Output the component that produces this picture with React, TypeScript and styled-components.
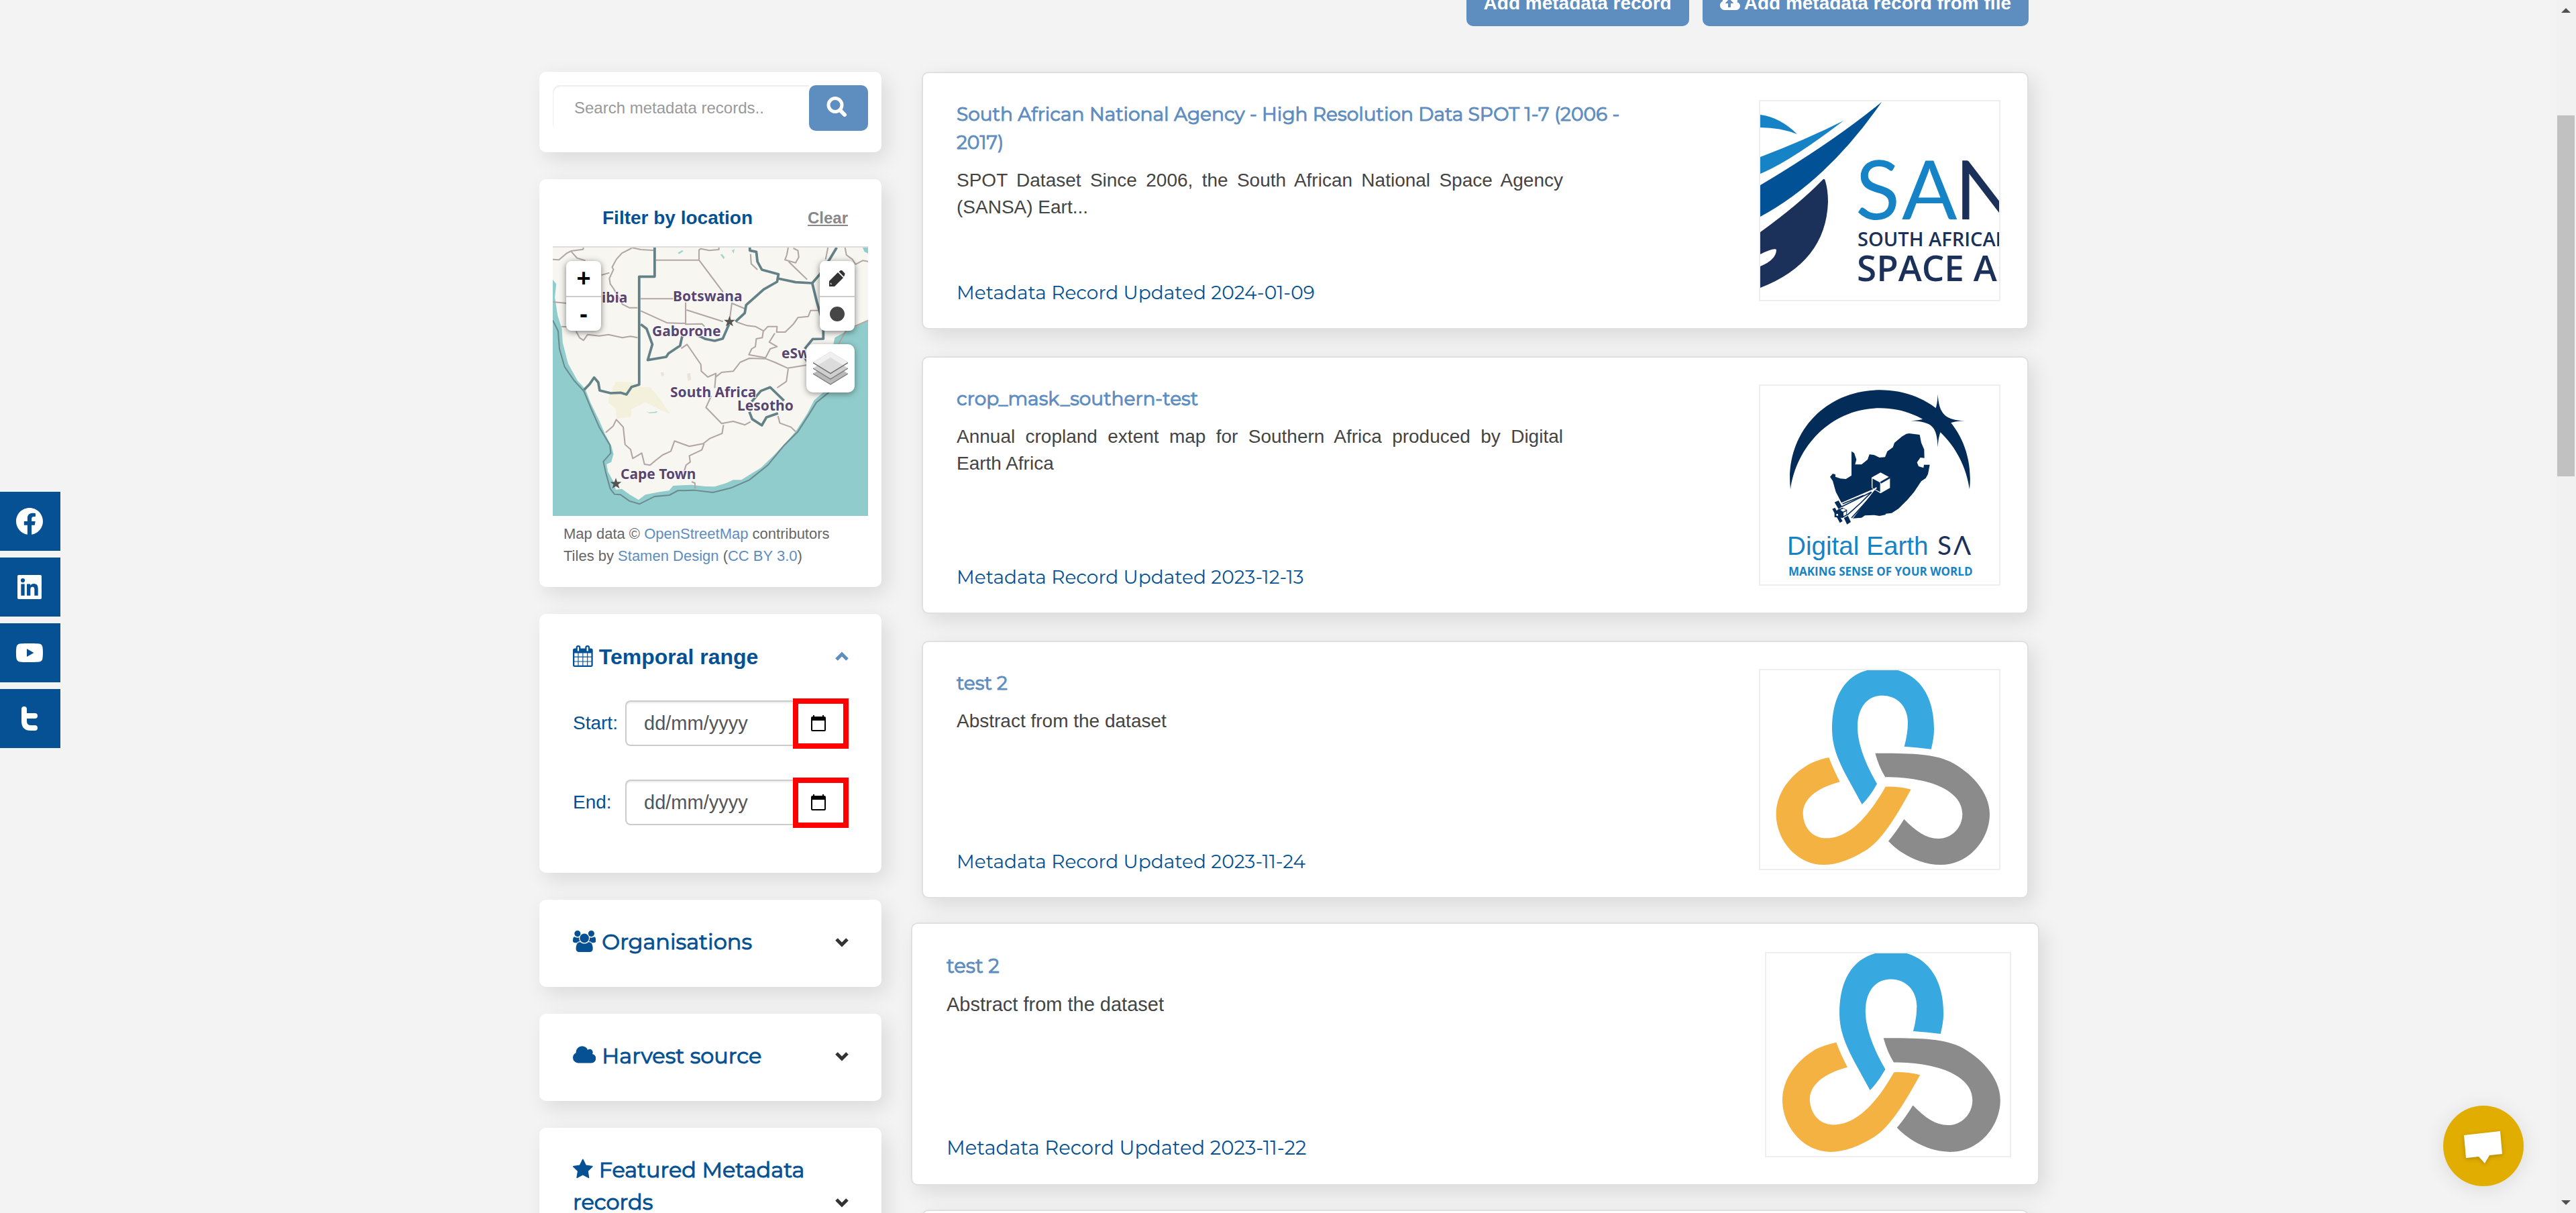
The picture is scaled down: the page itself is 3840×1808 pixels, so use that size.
import React from "react";
import styled, { createGlobalStyle, css } from "styled-components";
import { BiLogoFacebookCircle, BiLogoLinkedinSquare, BiLogoYoutube } from "react-icons/bi";

const sans = `"Liberation Sans", Arial, sans-serif`;
const display = `Montserrat, Inter, sans-serif`;
const navy = "#055193";
const steel = "#5e8dc0";

const GlobalStyle = createGlobalStyle`
  *, *::before, *::after { box-sizing: border-box; }
  html, body { margin: 0; background: #f3f3f3; }
  body { font-family: ${sans}; font-size: 28px; line-height: 40px; color: #444; overflow: hidden; }
  h2, h3, p { margin: 0; }
  a { color: ${steel}; text-decoration: none; }
  button { font: inherit; border: 0; padding: 0; cursor: pointer; }
`;

const Page = styled.div`
  height: 100vh;
  overflow: hidden;
  padding-right: 12px;
`;

const Container = styled.div`
  max-width: 2220px;
  margin: 0 auto;
`;

const Actions = styled.div`
  display: flex;
  justify-content: flex-end;
  gap: 20px;
  margin: -31px 0 68px;
`;

const ActionButton = styled.button`
  display: inline-flex;
  align-items: center;
  gap: 6px;
  height: 70px;
  padding: 2px 26px 0;
  border-radius: 10px;
  background: ${steel};
  color: #fff;
  font-weight: 700;
`;

const Columns = styled.main`
  display: grid;
  grid-template-columns: 510px minmax(0, 1fr);
  column-gap: 60px;
  align-items: start;
`;

const Stack = styled.div`
  display: flex;
  flex-direction: column;
  gap: 40px;
`;

const panelShadow = css`
  box-shadow: 8px 10px 30px rgba(0, 0, 0, 0.1);
`;

const Panel = styled.section<{ $pad: string }>`
  background: #fff;
  border-radius: 10px;
  padding: ${(p) => p.$pad};
  ${panelShadow}
`;

const SearchForm = styled.form`
  display: flex;
  height: 68px;
`;

const SearchInput = styled.input`
  flex: 1;
  min-width: 0;
  padding: 0 32px;
  border: 0;
  border-radius: 10px 0 0 10px;
  background: #fff;
  box-shadow: inset 1px 2px 2px rgba(0, 0, 0, 0.08);
  font: 24px ${sans};
  color: #555;
  &::placeholder { color: #999; opacity: 1; }
`;

const SearchButton = styled.button`
  display: flex;
  align-items: center;
  justify-content: center;
  width: 88px;
  padding: 0 5px 4px 0;
  border-radius: 10px;
  background: ${steel};
`;

const LocationHead = styled.div`
  display: flex;
  align-items: center;
  justify-content: space-between;
  height: 100px;
  padding: 16px 30px 0 74px;
`;

const LocationTitle = styled.h2`
  font-size: 28px;
  color: ${navy};
`;

const ClearLink = styled.a`
  font-size: 24px;
  font-weight: 700;
  color: #888;
  text-decoration: underline;
`;

const MapFrame = styled.div`
  position: relative;
  border-top: 2px solid #ddd;
`;

const MapDrawing = styled.svg`
  display: block;
  width: 100%;
  height: 400px;
`;

const MapControls = styled.div<{ $side: "left" | "right" }>`
  position: absolute;
  top: 20px;
  ${(p) => p.$side}: 20px;
  display: flex;
  flex-direction: column;
  border-radius: 8px;
  background: #fff;
  box-shadow: 0 2px 10px rgba(0, 0, 0, 0.5);
`;

const MapButton = styled.button`
  display: flex;
  align-items: center;
  justify-content: center;
  width: 52px;
  height: 52px;
  border-radius: 8px;
  background: transparent;
  color: #000;
  font-size: 36px;
  font-weight: 700;
  & + & { border-top: 2px solid #ccc; border-radius: 0; }
`;

const LayersButton = styled.button`
  position: absolute;
  top: 144px;
  right: 20px;
  display: flex;
  align-items: center;
  justify-content: center;
  width: 72px;
  height: 72px;
  border-radius: 10px;
  background: #fff;
  box-shadow: 0 2px 10px rgba(0, 0, 0, 0.4);
`;

const Attribution = styled.p`
  padding: 10px 16px 0;
  font-size: 22px;
  line-height: 33px;
  color: #666;
`;

const FacetHeader = styled.button<{ $plain?: boolean }>`
  display: flex;
  align-items: flex-end;
  justify-content: space-between;
  gap: 24px;
  width: 100%;
  background: transparent;
  text-align: left;
  color: ${navy};
  font-family: ${(p) => (p.$plain ? sans : display)};
  font-size: 32px;
  font-weight: ${(p) => (p.$plain ? 700 : 400)};
  -webkit-text-stroke: ${(p) => (p.$plain ? "0" : `1px ${navy}`)};
  line-height: 48px;
`;

const FacetIcon = styled.svg`
  height: 32px;
  margin-right: 9px;
  vertical-align: -4px;
  fill: currentColor;
`;

const Chevron = styled.svg<{ $open?: boolean }>`
  flex: none;
  width: 20px;
  height: 48px;
  fill: none;
  stroke: ${(p) => (p.$open ? steel : "#333")};
  stroke-width: 5;
`;

const DateRows = styled.div`
  display: flex;
  flex-direction: column;
  gap: 44px;
  margin-top: 38px;
`;

const DateRow = styled.div`
  display: flex;
  align-items: center;
  height: 74px;
`;

const DateLabel = styled.label`
  flex: none;
  width: 78px;
  color: ${navy};
`;

const DateInput = styled.input`
  flex: 1;
  min-width: 0;
  height: 68px;
  padding: 0 0 0 26px;
  border: 2px solid #ccc;
  border-right: 0;
  border-radius: 8px 0 0 8px;
  box-shadow: inset 0 2px 2px rgba(0, 0, 0, 0.08);
  font: 29px ${sans};
  color: #555;
  &::placeholder { color: #555; opacity: 1; }
`;

const PickerButton = styled.button`
  display: flex;
  align-items: center;
  justify-content: center;
  width: 83px;
  height: 75px;
  padding-right: 7px;
  border: 8px solid #f00;
  background: #fff;
`;

const Record = styled.article<{ $raised?: boolean }>`
  display: flex;
  justify-content: space-between;
  height: ${(p) => (p.$raised ? 392 : 384)}px;
  margin: ${(p) => (p.$raised ? "-4px -16px" : "0")};
  padding: ${(p) => (p.$raised ? "42px 40px 41px 51px" : "40px 40px 40px 50px")};
  border: 2px solid #e0e0e0;
  border-radius: 10px;
  background: #fff;
  font-size: ${(p) => (p.$raised ? 29 : 28)}px;
  ${panelShadow}
`;

const RecordBody = styled.div`
  display: flex;
  flex-direction: column;
  width: 1040px;
`;

const RecordTitle = styled.h3`
  font-family: ${display};
  font-size: inherit;
  font-weight: 400;
  line-height: 42px;
  -webkit-text-stroke: 1px ${steel};
`;

const RecordText = styled.p`
  width: 904px;
  margin-top: 16px;
  text-align: justify;
`;

const RecordDate = styled.p`
  margin-top: auto;
  font-family: ${display};
  line-height: 26px;
  color: ${navy};
`;

const Thumb = styled.div<{ $raised?: boolean }>`
  flex: none;
  width: ${(p) => (p.$raised ? 367 : 360)}px;
  height: ${(p) => (p.$raised ? 306 : 300)}px;
  border: 2px solid #eee;
  svg { display: block; width: 100%; height: 100%; }
`;

const Social = styled.nav`
  position: fixed;
  top: 733px;
  left: 0;
  display: flex;
  flex-direction: column;
  gap: 10px;
`;

const SocialLink = styled.a`
  display: flex;
  align-items: center;
  justify-content: center;
  width: 90px;
  height: 88px;
  padding-right: 2px;
  background: ${navy};
  color: #fff;
  font-size: 48px;
`;

const Chat = styled.button`
  position: fixed;
  right: 78px;
  bottom: 40px;
  width: 120px;
  height: 120px;
  border-radius: 50%;
  background: #e1ad01;
  box-shadow: 0 4px 30px rgba(0, 0, 0, 0.1);
  svg { display: block; filter: drop-shadow(0 2px 3px rgba(0, 0, 0, 0.2)); }
`;

const ScrollTrack = styled.div`
  position: fixed;
  top: 0;
  right: 0;
  bottom: 0;
  display: flex;
  flex-direction: column;
  align-items: center;
  justify-content: space-between;
  width: 30px;
  padding: 12px 0;
  background: #f1f1f1;
`;

const ScrollThumb = styled.div`
  width: 26px;
  height: 538px;
  margin: 153px 0 auto;
  background: #c1c1c1;
`;

const ICONS = {
  calendar: {
    box: "0 0 1664 1792",
    d: "M128 1664h288v-288H128v288zm352 0h320v-288H480v288zM128 1312h288V992H128v320zm352 0h320V992H480v320zM128 928h288V640H128v288zm736 736h320v-288H864v288zM480 928h320V640H480v288zm768 736h288v-288h-288v288zM864 1312h320V992H864v320zM512 448V160q0-13-9.5-22.5T480 128h-64q-13 0-22.5 9.5T384 160v288q0 13 9.5 22.5T416 480h64q13 0 22.5-9.5T512 448zm736 864h288V992h-288v320zM864 928h320V640H864v288zm384 0h288V640h-288v288zm32-480V160q0-13-9.5-22.5T1248 128h-64q-13 0-22.5 9.5T1152 160v288q0 13 9.5 22.5t22.5 9.5h64q13 0 22.5-9.5t9.5-22.5zm384-64v1280q0 52-38 90t-90 38H128q-52 0-90-38t-38-90V384q0-52 38-90t90-38h128v-96q0-66 47-113T416 0h64q66 0 113 47t47 113v96h384v-96q0-66 47-113t113-47h64q66 0 113 47t47 113v96h128q52 0 90 38t38 90z",
  },
  users: {
    box: "0 0 1920 1792",
    d: "M593 896q-162 5-265 128H194q-82 0-138-40.5T0 865q0-353 124-353 6 0 43.5 21t97.5 42.5T384 597q67 0 133-23-5 37-5 66 0 139 81 256zM1664 1533q0 120-73 189.5t-194 69.5H523q-121 0-194-69.5T256 1533q0-53 3.5-103.5t14-109T300 1212t43-97.5 62-81 85.5-53.5T602 960q10 0 43 21.5t73 48 107 48 135 21.5 135-21.5 107-48 73-48 43-21.5q61 0 111.5 20t85.5 53.5 62 81 43 97.5 26.5 108.5 14 109 3.5 103.5zM640 256q0 106-75 181t-181 75-181-75-75-181 75-181T384 0t181 75 75 181zM1344 640q0 159-112.5 271.5T960 1024 688.5 911.5 576 640t112.5-271.5T960 256t271.5 112.5T1344 640zM1920 865q0 78-56 118.5T1726 1024h-134q-103-123-265-128 81-117 81-256 0-29-5-66 66 23 133 23 59 0 119-21.5t97.5-42.5 43.5-21q124 0 124 353zM1792 256q0 106-75 181t-181 75-181-75-75-181 75-181T1536 0t181 75 75 181z",
  },
  cloud: {
    box: "0 0 1920 1792",
    d: "M1920 1152q0 159-112.5 271.5T1536 1536H448q-185 0-316.5-131.5T0 1088q0-132 71-241.5T258 683q-2-28-2-43 0-212 150-362t362-150q158 0 286.5 88T1242 446q70-62 166-62 106 0 181 75t75 181q0 75-41 138 129 30 213 134.5t84 239.5z",
  },
  star: {
    box: "0 0 1664 1792",
    d: "M1664 647q0 22-26 48l-363 354 86 500q1 7 1 20 0 21-10.5 35.5T1321 1619q-19 0-40-12l-449-236-449 236q-22 12-40 12-21 0-31.5-14.5T301 1569q0-6 2-20l86-500L25 695Q0 668 0 647q0-37 56-46l502-73L783 73q19-41 49-41t49 41l225 455 502 73q56 9 56 46z",
  },
};

const UPLOAD_ARROW =
  "M1280 864q0-14-9-23L919 489q-9-9-23-9t-23 9L522 840q-10 12-10 24 0 14 9 23t23 9h224v352q0 13 9.5 22.5t22.5 9.5h192q13 0 22.5-9.5t9.5-22.5V896h224q13 0 22.5-9.5t9.5-22.5z";

type IconName = keyof typeof ICONS;

function Facet({ icon, title, open, plain }: { icon: IconName; title: string; open?: boolean; plain?: boolean }) {
  return (
    <FacetHeader type="button" aria-expanded={!!open} $plain={plain}>
      <span>
        <FacetIcon viewBox={ICONS[icon].box} aria-hidden="true">
          <path d={ICONS[icon].d} />
        </FacetIcon>
        {title}
      </span>
      <Chevron viewBox="0 0 20 48" $open={open} aria-hidden="true">
        <path d={open ? "M2 28l8-8 8 8" : "M2 20l8 8 8-8"} />
      </Chevron>
    </FacetHeader>
  );
}

function RegionMap() {
  return (
    <MapDrawing viewBox="0 0 470 400" preserveAspectRatio="xMidYMid slice" role="img" aria-label="Map of Southern Africa">
      <g transform="scale(0.3444 0.3333) translate(-99 -837)">
        <rect x="99" y="837" width="1370" height="1204" fill="#f7f6f1" />
        <path d="M340 1510L372 1436 440 1440 480 1460 520 1462 560 1510 608 1582 560 1560 500 1528 440 1560 436 1594 376 1602 370 1556 340 1530Z" fill="#f3f0dc" />
        <path d="M566 1396l12-2 4 14-12 4zM680 1400l14-2 4 30-14 6z" fill="#ebe3d8" />
        <g fill="#90cccb">
          <path d="M99 980L114 1000 108 1060 120 1140 138 1200 142 1262 165 1355 205 1430 240 1470 262 1530 300 1610 325 1670 352 1722 362 1760 352 1796 332 1806 338 1840 360 1880 372 1920 398 1916 430 1940 470 1965 500 1942 560 1930 602 1924 620 1902 700 1898 760 1905 800 1906 850 1890 880 1876 915 1876 1000 1822 1060 1762 1110 1706 1150 1660 1200 1580 1230 1520 1270 1484 1300 1440 1300 1330 1320 1240 1400 1195 1470 1163V2041H99Z" />
          <path d="M1440 837L1470 837V866L1448 856Z" />
          <path d="M640 860l20-12 4 6-18 12zM824 868l14 20 6-6-12-16zM874 850l12-6-4 20zM502 1570l14 4 22-2 14-4-4 8-30 2z" opacity="0.8" />
        </g>
        <g fill="none" stroke="#b1a5a5" strokeWidth="6" strokeLinejoin="round">
          <path d="M99 890L126 892 160 862 180 852 230 845 232 837M180 856L204 884 240 895M440 840L398 862 374 890 356 925 362 935 344 975 348 1000 362 1020 400 1090 430 1106 466 1106" />
          <path d="M440 837L480 846 540 850M545 893H732L836 1036M732 893V848L740 842 776 850 818 846V837" />
          <path d="M480 1066H620M674 1082V1180L745 1178 756 1190M678 1116L836 1168M480 1120L595 1174 675 1176M864 1166L874 1086 930 1110" />
          <path d="M99 1080L160 1086M310 960L344 950M136 1190L160 1192M200 1212L215 1240 232 1252 250 1226 300 1232 340 1226 400 1240 436 1234 466 1240" />
          <path d="M955 866L958 910 985 936M1118 837L1112 870 1104 892 1150 905 1164 880 1160 850 1140 840M1120 900L1165 945 1200 980M1290 837L1280 890M1364 837L1370 870 1396 890 1410 912 1440 895 1470 900" />
          <path d="M895 1170L940 1186 976 1190 1012 1210 1030 1190 1070 1190 1068 1215 1105 1215 1140 1180 1160 1150 1205 1145 1215 1118 1248 1118" />
          <path d="M1010 1212L1006 1240 980 1245 976 1280 960 1290 948 1316 980 1322 1020 1330 1040 1290 1070 1280 1036 1260 1060 1220" />
          <path d="M655 1288L680 1270 700 1300 740 1360 742 1390 770 1416 805 1400 800 1465M805 1415L830 1395 880 1390 910 1350 950 1332 1020 1334 1060 1350 1115 1376 1200 1362M1118 1380L1110 1436 1070 1464" />
          <path d="M785 1500L762 1552 830 1624 880 1614 930 1630 955 1616M838 1630L832 1668 780 1690 750 1714 690 1726 626 1702 610 1748 575 1764 545 1788 520 1810 496 1806 484 1756 445 1780 436 1740 412 1718 404 1640 374 1606 360 1636 328 1664" />
          <path d="M754 1714L744 1742 690 1768 694 1796 676 1810 662 1856M700 1884L714 1890 716 1916M1074 1590L1082 1622 1130 1640 1150 1660" />
          <path d="M1330 1280L1370 1205 1470 1160" />
        </g>
        <g fill="none" stroke="#638187" strokeWidth="11" strokeLinejoin="round">
          <path d="M540 837V967H473V1450L440 1460 418 1494 392 1486 350 1488 302 1476 296 1440 278 1418 258 1448 234 1474" />
          <path d="M480 1180L505 1200 530 1270 510 1340 590 1326 600 1310 650 1276 660 1230M720 1226L760 1246 800 1254 835 1244 862 1180M890 1168L930 1130 936 1094 1012 1024 1070 990 1076 956 1004 936 985 900 980 856 952 850V837" />
          <path d="M1076 976L1150 992 1222 996 1256 955 1300 885 1328 837M1222 996L1242 1080 1270 1180V1245L1224 1246 1190 1290M1190 1330L1200 1346" />
          <path d="M960 1526L1000 1478 1040 1462 1100 1522M950 1572L962 1604 1004 1632 1024 1596 1074 1578" />
        </g>
        <path d="M99 1162L122 1210 128 1290 150 1370 190 1430 234 1480 266 1560 300 1640 346 1720 350 1756 318 1794 330 1850 348 1916 366 1940 392 1942 430 1970 474 1984 540 1950 604 1944 640 1924 710 1922 792 1932 870 1912 950 1876 1030 1810 1100 1722 1160 1660 1210 1580 1240 1530 1300 1480" fill="none" stroke="#6b8a8f" strokeWidth="6" />
        <g fill="#555">
          <path d="M864 1142l6 18h18l-14 12 6 17-16-10-16 10 6-17-14-12h18z" />
          <path d="M372 1867l6 18h18l-14 12 6 17-16-10-16 10 6-17-14-12h18z" />
        </g>
      </g>
      <g fill="#584570" stroke="#fff" strokeWidth="2" paintOrder="stroke" fontFamily="'Noto Sans', sans-serif" fontWeight="700" fontSize="21">
        <text x="73" y="82" fontSize="21">ibia</text>
        <text x="179" y="80">Botswana</text>
        <text x="148" y="132">Gaborone</text>
        <text x="341" y="165">eSwatini</text>
        <text x="175" y="223">South Africa</text>
        <text x="275" y="243">Lesotho</text>
        <text x="101" y="345">Cape Town</text>
      </g>
    </MapDrawing>
  );
}

function SansaLogo() {
  return (
    <svg viewBox="0 0 356 296" preserveAspectRatio="xMidYMid slice" role="img" aria-label="SANSA">
      <path d="M0 20Q30 24 55 49Q30 39 0 39Z" fill="#1583c6" />
      <path d="M0 83Q66 58 124 29Q44 90 0 108Z" fill="#1583c6" />
      <path d="M0 125Q108 61 181 1Q100 118 0 172Z" fill="#005195" />
      <path d="M0 195Q58 153 92 118Q96 113 97 119Q101 132 101 150Q98 240 0 278V246Q24 236 24 221Q20 218 0 228Z" fill="#1b315a" />
      <g fontFamily="Lato, sans-serif" fontSize="122">
        <text x="142" y="176" fill="#1583c6">S</text>
        <text x="211" y="176" fill="#1583c6">A</text>
        <text x="290" y="176" fill="#1b315a">N</text>
      </g>
      <g fontFamily="'Open Sans', sans-serif" fontWeight="600" fill="#1b315a">
        <text x="145" y="216" fontSize="29">SOUTH AFRICAN</text>
        <text x="144" y="268" fontSize="53">SPACE AGENCY</text>
      </g>
    </svg>
  );
}

function DigitalEarthLogo() {
  return (
    <svg viewBox="192 165 1068 888" preserveAspectRatio="xMidYMid slice" role="img" aria-label="Digital Earth SA">
      <g fill="#042c58">
        <path d="M327 628C300 380 480 184 727 184C975 184 1154 380 1128 628C1100 430 940 265 727 265C515 265 355 430 327 628Z" />
        <path d="M986 202C990 290 1020 320 1106 322C1012 326 992 350 986 440C982 350 964 326 866 322C964 316 982 290 986 202Z" />
        <path d="M504 572L516 558 528 562 528 572 550 580 575 582 600 566V458L612 466 622 495 616 517H645L672 495 680 472 700 474 725 486 750 484 760 458 785 440 792 420 825 392 845 380 858 378 905 384 912 420 925 450 926 488 908 486 893 508 900 525 922 532 924 518H950L942 560 932 578 912 592 880 640 850 675 810 715 780 734 753 737 752 742 725 747 700 743 660 745 645 755 605 758 575 740 556 690 530 640 516 590Z" />
      </g>
      <path d="M555 688L710 622 605 760 560 750Z" fill="#fff" />
      <path d="M556 706L690 640 640 690 580 744" fill="none" stroke="#042c58" strokeWidth="5" />
      <path d="M560 693L655 655M600 756L680 668" stroke="#042c58" strokeWidth="5" />
      <path d="M690 575L730 553 772 575V622L730 646 690 622Z" fill="#fff" />
      <path d="M694 580L728 598V640L694 622ZM728 595L770 571 774 578 732 602Z" fill="#042c58" />
      <path d="M712 620L690 640" stroke="#fff" strokeWidth="6" />
      <g fill="#042c58">
        <path d="M524 686L542 678 558 706 542 716ZM514 716L526 710 560 770 548 778ZM566 756L584 746 597 774 580 785Z" />
        <path d="M540 718L560 710 580 720V744L560 756 524 752V732Z" />
      </g>
      <path d="M550 720L564 714 576 721 562 728ZM564 732L577 726V741L564 748ZM532 738h8v8h-8z" fill="#fff" />
      <text x="312" y="922" fontFamily={sans} fontSize="116" fill="#1583c6">Digital Earth</text>
      <g fontFamily="Lato, sans-serif" fontSize="116" fontWeight="400" fill="#1b315a">
        <text x="984" y="922">S</text>
        <text x="1056" y="922">Λ</text>
      </g>
      <text x="318" y="1014" fontFamily="'Open Sans', sans-serif" fontSize="51" fontWeight="700" fill="#1583c6">MAKING SENSE OF YOUR WORLD</text>
    </svg>
  );
}

function KnotLogo() {
  return (
    <svg viewBox="192 177 1068 888" preserveAspectRatio="xMidYMid slice" role="img" aria-label="Organisation logo">
      <path fill="#37a8e0" d="M513 440C513 260 600 168 740 168C880 168 969 270 969 440Q969 480 956 530Q900 522 836 518Q852 460 852 410C852 340 805 290 738 290C670 290 627 345 627 430C627 510 665 600 714 685Q685 738 647 777L580 655C535 570 513 510 513 440Z" />
      <path fill="#f4b243" d="M499 567Q518 618 548 676C440 705 383 755 383 818C385 880 425 928 487 928C580 928 665 850 752 698Q810 696 866 710C800 830 735 940 660 985C600 1022 535 1047 475 1047C350 1047 263 930 263 822C263 730 320 650 410 597Q450 577 499 567Z" />
      <path fill="#8b8b8b" d="M706 548C850 548 960 548 1040 585C1130 630 1218 720 1218 820C1218 930 1130 1047 998 1047C910 1047 820 1000 765 941Q800 900 835 843C885 895 935 930 988 930C1050 930 1096 880 1096 820C1096 720 960 655 751 655Q722 608 706 548Z" />
    </svg>
  );
}

const records = [
  {
    title: "South African National Agency - High Resolution Data SPOT 1-7 (2006 - 2017)",
    text: "SPOT Dataset Since 2006, the South African National Space Agency (SANSA) Eart...",
    date: "2024-01-09",
    Logo: SansaLogo,
  },
  {
    title: "crop_mask_southern-test",
    text: "Annual cropland extent map for Southern Africa produced by Digital Earth Africa",
    date: "2023-12-13",
    Logo: DigitalEarthLogo,
  },
  { title: "test 2", text: "Abstract from the dataset", date: "2023-11-24", Logo: KnotLogo },
  { title: "test 2", text: "Abstract from the dataset", date: "2023-11-22", Logo: KnotLogo, raised: true },
  { title: "test 2", text: "Abstract from the dataset", date: "2023-11-22", Logo: KnotLogo },
];

function DateField({ id, label }: { id: string; label: string }) {
  return (
    <DateRow>
      <DateLabel htmlFor={id}>{label}</DateLabel>
      <DateInput id={id} type="text" placeholder="dd/mm/yyyy" />
      <PickerButton type="button" aria-label={`Pick ${id} date`}>
        <svg width="22" height="24" viewBox="0 0 22 24" aria-hidden="true">
          <path d="M3 0h2v2h12V0h2v2h1q2 0 2 2v18q0 2-2 2H2q-2 0-2-2V4q0-2 2-2h1zM2 8v14h18V8z" fillRule="evenodd" />
        </svg>
      </PickerButton>
    </DateRow>
  );
}

export default function App() {
  return (
    <>
      <GlobalStyle />
      <Page>
        <Container>
          <Actions>
            <ActionButton type="button">Add metadata record</ActionButton>
            <ActionButton type="button">
              <svg width="30" height="28" viewBox="0 0 1920 1792" fill="currentColor" fillRule="evenodd" aria-hidden="true">
                <path d={ICONS.cloud.d + UPLOAD_ARROW} />
              </svg>
              Add metadata record from file
            </ActionButton>
          </Actions>
          <Columns>
            <Stack>
              <Panel $pad="20px 20px 32px">
                <SearchForm role="search">
                  <SearchInput type="text" placeholder="Search metadata records.." aria-label="Search metadata records" />
                  <SearchButton type="button" aria-label="Search">
                    <svg width="31" height="30" viewBox="0 0 31 30" fill="none" stroke="#fff" strokeLinecap="round" aria-hidden="true">
                      <circle cx="13" cy="12.5" r="10" strokeWidth="5" />
                      <path d="M21 21l6 6" strokeWidth="6" />
                    </svg>
                  </SearchButton>
                </SearchForm>
              </Panel>
              <Panel $pad="0 20px 30px">
                <LocationHead>
                  <LocationTitle>Filter by location</LocationTitle>
                  <ClearLink href="#clear">Clear</ClearLink>
                </LocationHead>
                <MapFrame>
                  <RegionMap />
                  <MapControls $side="left">
                    <MapButton type="button" aria-label="Zoom in">+</MapButton>
                    <MapButton type="button" aria-label="Zoom out">-</MapButton>
                  </MapControls>
                  <MapControls $side="right">
                    <MapButton type="button" aria-label="Draw a shape">
                      <svg width="24" height="24" viewBox="0 0 24 24" fill="#333" aria-hidden="true">
                        <path d="M0 24v-8L13 3l8 8L8 24zM14.500 2L17 0q2-1 3 1l3 3q1 1 0 3l-1 2.500zM2 18v3h2z" fillRule="evenodd" />
                      </svg>
                    </MapButton>
                    <MapButton type="button" aria-label="Draw a point">
                      <svg width="22" height="22" viewBox="0 0 22 22" aria-hidden="true">
                        <circle cx="11" cy="11" r="11" fill="#464646" />
                      </svg>
                    </MapButton>
                  </MapControls>
                  <LayersButton type="button" aria-label="Layers">
                    <svg width="52" height="50" viewBox="0 0 150 150" preserveAspectRatio="none" aria-hidden="true">
                      <path d="M0 98L75 50l75 48-75 48z" fill="#b9b9b9" />
                      <path d="M0 99l75 48 75-48" fill="none" stroke="#777" strokeWidth="4" />
                      <path d="M0 74L75 28l75 46-75 48z" fill="#cfcfcf" />
                      <path d="M0 75l75 48 75-48" fill="none" stroke="#777" strokeWidth="4" />
                      <path d="M0 48L75 1l75 47-75 48z" fill="#f0f0f0" stroke="#ddd" strokeWidth="2" />
                      <path d="M22 60L75 26l53 34-53 36z" fill="#dcdcdc" />
                      <path d="M0 50l75 48 75-48" fill="none" stroke="#6e6e6e" strokeWidth="4" />
                    </svg>
                  </LayersButton>
                </MapFrame>
                <Attribution>
                  Map data © <a href="#osm">OpenStreetMap</a> contributors
                  <br />
                  Tiles by <a href="#stamen">Stamen Design</a> (<a href="#license">CC BY 3.0</a>)
                </Attribution>
              </Panel>
              <Panel $pad="40px 49px 68px 50px">
                <Facet icon="calendar" title="Temporal range" open plain />
                <DateRows>
                  <DateField id="start" label="Start:" />
                  <DateField id="end" label="End:" />
                </DateRows>
              </Panel>
              <Panel $pad="39px 49px 43px 50px">
                <Facet icon="users" title="Organisations" />
              </Panel>
              <Panel $pad="39px 49px 43px 50px">
                <Facet icon="cloud" title="Harvest source" />
              </Panel>
              <Panel $pad="39px 49px 43px 50px">
                <Facet icon="star" title="Featured Metadata records" />
              </Panel>
            </Stack>
            <Stack>
              {records.map(({ title, text, date, Logo, raised }, i) => (
                <Record key={i} $raised={raised}>
                  <RecordBody>
                    <RecordTitle>
                      <a href={`#record-${i + 1}`}>{title}</a>
                    </RecordTitle>
                    <RecordText>{text}</RecordText>
                    <RecordDate>Metadata Record Updated {date}</RecordDate>
                  </RecordBody>
                  <Thumb $raised={raised}>
                    <Logo />
                  </Thumb>
                </Record>
              ))}
            </Stack>
          </Columns>
        </Container>
      </Page>
      <Social aria-label="Social media">
        <SocialLink href="#facebook" aria-label="Facebook"><BiLogoFacebookCircle /></SocialLink>
        <SocialLink href="#linkedin" aria-label="LinkedIn"><BiLogoLinkedinSquare /></SocialLink>
        <SocialLink href="#youtube" aria-label="YouTube"><BiLogoYoutube /></SocialLink>
        <SocialLink href="#twitter" aria-label="Twitter">
          <svg width="24" height="36" viewBox="0 0 24 36" fill="none" stroke="currentColor" strokeWidth="8" strokeLinecap="round" aria-hidden="true">
            <path d="M4 4V22Q4 32 14 32H20M4 14H20" />
          </svg>
        </SocialLink>
      </Social>
      <Chat type="button" aria-label="Open chat">
        <svg width="120" height="120" viewBox="0 0 120 120" fill="#fff" aria-hidden="true">
          <path d="M31 44L85 38 88 72 69 74 62 86 53 76 34 78Z" />
        </svg>
      </Chat>
      <ScrollTrack aria-hidden="true">
        <svg width="14" height="7" viewBox="0 0 14 7" fill="#505050"><path d="M0 7L7 0l7 7z" /></svg>
        <ScrollThumb />
        <svg width="14" height="7" viewBox="0 0 14 7" fill="#505050"><path d="M0 0h14L7 7z" /></svg>
      </ScrollTrack>
    </>
  );
}
